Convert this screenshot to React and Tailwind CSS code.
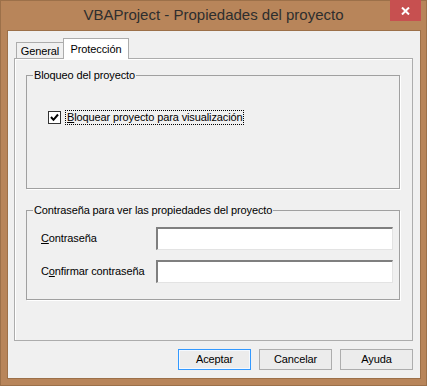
import React from 'react';

const ui = "font-['Liberation_Sans',Arial,sans-serif] text-[11px] leading-[13px] tracking-[-0.12px] text-black";

const Field = ({ label, accessKey }) => (
  <div className="flex items-center">
    <span className="w-[115px]">
      {label.slice(0, accessKey)}
      <span className="underline">{label[accessKey]}</span>
      {label.slice(accessKey + 1)}
    </span>
    <div className="w-[237px] h-[23px] bg-white border-t-2 border-l-2 border-r border-b border-t-[#7f7f7f] border-l-[#7f7f7f] border-r-[#e3e3e3] border-b-[#e3e3e3]" />
  </div>
);

const Button = ({ children, primary }) => (
  <button
    className={
      primary
        ? 'w-[73px] h-[21px] border border-[#3399ff] bg-[#ececec] shadow-[inset_0_0_0_1px_#f4f9ff]'
        : 'w-[73px] h-[21px] border border-[#adadad] bg-[#ececec]'
    }
  >
    {children}
  </button>
);

export default function App() {
  return (
    <div className={`relative w-[427px] h-[386px] bg-[#b8855a] border border-[#9c7049] flex flex-col ${ui}`}>
      {/* title bar */}
      <div className="h-[29px] flex items-center justify-center pb-[1px]">
        <span className="font-['Liberation_Sans',Arial,sans-serif] text-[15px] leading-[18px] tracking-normal text-[#2e2e2e]">
          VBAProject - Propiedades del proyecto
        </span>
      </div>
      <div className="absolute -top-px right-[5px] w-[31px] h-[21px] bg-[#c75050] flex items-center justify-center">
        <svg width="9" height="8" viewBox="0 0 9 8">
          <path d="M1 0.5 L8 7.5 M8 0.5 L1 7.5" stroke="#fff" strokeWidth="2" />
        </svg>
      </div>

      {/* client area */}
      <div className="ml-[6px] mr-[5px] mb-[6px] flex-1 border border-[#9c7049] bg-[#f0f0f0] flex flex-col">
        {/* tabs */}
        <div className="flex items-end pt-[7px] pl-[8px]">
          <div className="w-[48px] h-[16px] border border-b-0 border-[#acacac] bg-[#f0f0f0] flex items-center justify-center pt-[2px]">
            General
          </div>
          <div className="relative z-10 -ml-px -mb-px w-[66px] h-[21px] border border-b-0 border-[#acacac] bg-white flex items-start justify-center pt-[4px]">
            Protección
          </div>
        </div>

        {/* tab page */}
        <div className="ml-[6px] w-[399px] h-[283px] border border-[#acacac] shadow-[inset_1px_1px_0_#fff] flex flex-col pl-[11px]">
          <fieldset className="mt-[10px] w-[374px] h-[120px] border border-[#a0a0a0] shadow-[1px_1px_0_#fff]">
            <legend className="ml-[6px] px-[1px]">Bloqueo del proyecto</legend>
            <div className="mt-[28px] pl-[21px] flex items-center gap-[4px]">
              <div className="w-[13px] h-[13px] border border-[#333] bg-white flex items-center justify-center">
                <svg width="9" height="9" viewBox="0 0 9 9">
                  <path d="M1 4 L3.5 6.8 L8 1.5" stroke="#000" strokeWidth="2" fill="none" />
                </svg>
              </div>
              <span className="border border-dotted border-black px-[1px] leading-[13px]">
                <span className="underline">B</span>loquear proyecto para visualización
              </span>
            </div>
          </fieldset>

          <fieldset className="mt-[15px] w-[374px] h-[96px] border border-[#a0a0a0] shadow-[1px_1px_0_#fff]">
            <legend className="ml-[6px] px-[1px]">Contraseña para ver las propiedades del proyecto</legend>
            <div className="mt-[10px] pl-[14px] flex flex-col gap-[10px]">
              <Field label="Contraseña" accessKey={0} />
              <Field label="Confirmar contraseña" accessKey={1} />
            </div>
          </fieldset>
        </div>

        {/* buttons */}
        <div className="mt-[8px] flex justify-end gap-[8px] pr-[7px]">
          <Button primary>Aceptar</Button>
          <Button>Cancelar</Button>
          <Button>Ayuda</Button>
        </div>
      </div>
    </div>
  );
}
